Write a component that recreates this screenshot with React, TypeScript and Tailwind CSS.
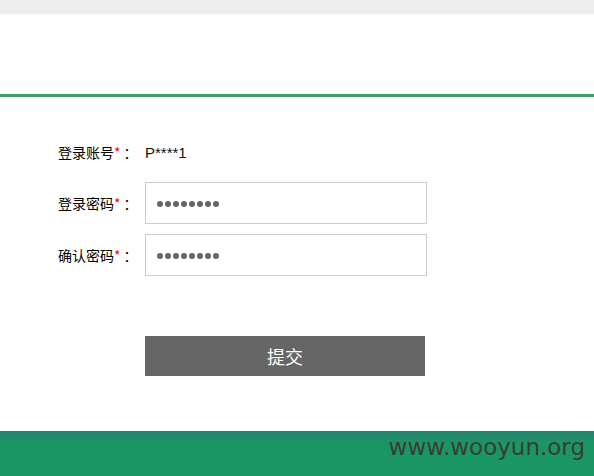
import React from "react";

const font = { fontFamily: '"Noto Sans CJK SC", "Noto Sans", sans-serif' };

function Label({ text }: { text: string }) {
  return (
    <div className="flex w-[87px] shrink-0 items-center text-[14px] leading-none text-black">
      <span>{text}</span>
      <span className="text-[#ff0000]">*</span>
      <span className="ml-[3px]">：</span>
    </div>
  );
}

function Dots() {
  return (
    <div className="flex items-center gap-[2px]">
      {[0, 1, 2, 3, 4, 5, 6, 7].map((i) => (
        <span key={i} className="block h-[6px] w-[6px] rounded-full bg-[#666666]" />
      ))}
    </div>
  );
}

export default function App() {
  return (
    <div className="flex h-[476px] w-[594px] flex-col overflow-hidden bg-white" style={font}>
      <div className="h-[14px] shrink-0 bg-[#eeeeee]" />
      <div className="h-[80px] shrink-0 bg-white" />
      <div className="h-[3px] shrink-0 bg-[#38a06c]" />
      <div className="flex flex-1 flex-col pl-[58px] pt-[43px]">
        <div className="flex h-[24px] items-center">
          <Label text="登录账号" />
          <div className="text-[15px] leading-none text-[#111]" style={{ fontFamily: '"Liberation Sans", "Noto Sans CJK SC", sans-serif' }}>
            P****1
          </div>
        </div>
        <div className="mt-[18px] flex items-center">
          <Label text="登录密码" />
          <div className="flex h-[42px] w-[282px] items-center border border-[#cccccc] pl-[11px] pt-[1px]">
            <Dots />
          </div>
        </div>
        <div className="mt-[10px] flex items-center">
          <Label text="确认密码" />
          <div className="flex h-[42px] w-[282px] items-center border border-[#cccccc] pl-[11px] pt-[1px]">
            <Dots />
          </div>
        </div>
        <div className="mt-[60px] pl-[87px]">
          <button className="flex h-[40px] w-[280px] items-center justify-center bg-[#666666] text-[18px] text-white">
            提交
          </button>
        </div>
      </div>
      <div className="flex h-[45px] shrink-0 items-start justify-end bg-gradient-to-b from-[#2a8070] to-[#1a9664] to-[25%] pr-[9px] pt-[1px]">
        <span
          className="text-[23px] leading-[30px] text-[#3a3a3a]"
          style={{ fontFamily: '"DejaVu Sans", sans-serif' }}
        >
          www.wooyun.org
        </span>
      </div>
    </div>
  );
}
